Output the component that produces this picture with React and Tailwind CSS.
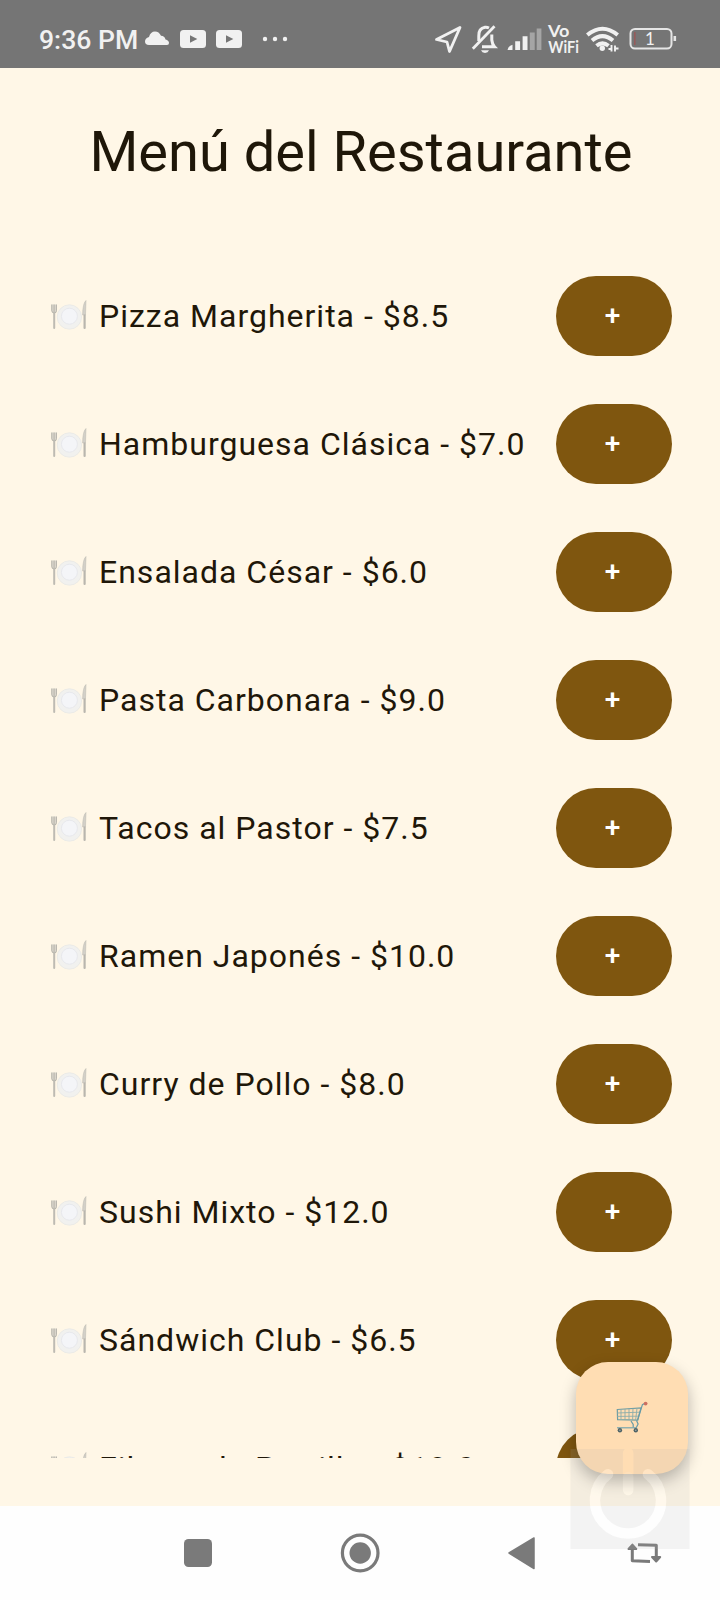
const dishes = [
  'Pizza Margherita - $8.5',
  'Hamburguesa Clásica - $7.0',
  'Ensalada César - $6.0',
  'Pasta Carbonara - $9.0',
  'Tacos al Pastor - $7.5',
  'Ramen Japonés - $10.0',
  'Curry de Pollo - $8.0',
  'Sushi Mixto - $12.0',
  'Sándwich Club - $6.5',
  'Filete a la Parrilla - $18.0',
];

function PlateIcon() {
  return (
    <svg className="block h-[34px] w-[38px] shrink-0" viewBox="0 0 38 34" fill="none">
      <circle cx="19.4" cy="18" r="12.2" fill="#f1f1ef" stroke="#e9e8e5" strokeWidth="0.8" />
      <circle cx="19.4" cy="17.2" r="8" fill="#f4f5f8" stroke="#e5e7eb" strokeWidth="0.9" />
      <path d="M1.500 5.500H6.600V11.500Q6.400 13.500 4 14Q1.700 13.500 1.500 11.500Z" fill="#dedad0" />
      <path d="M1.800 5.500v6.200q0 2.300 2.400 2.300t2.200-2.300V5.500M4.100 5.500v8" stroke="#aeaba4" strokeWidth="0.9" />
      <path d="M4.200 14v15" stroke="#bebbb3" strokeWidth="2" strokeLinecap="round" />
      <path d="M36 1.500Q32.800 4 32.600 16h2.900z" fill="#d3d0c8" stroke="#b9b6ae" strokeWidth="0.500" />
      <path d="M34.600 16.500v12.500" stroke="#b9b6ae" strokeWidth="2.200" strokeLinecap="round" />
    </svg>
  );
}

function CartIcon() {
  return (
    <svg className="mb-[2px] block h-[34px] w-[34px]" viewBox="0 0 34 34" fill="none">
      <path d="M2.300 9.500L26 8L22.600 20.200L2.600 19.600Z" stroke="#6f9da3" strokeWidth="1.200" />
      <path d="M6 9.300v10.300M10 9v10.800M14 8.800v11M18 8.600l-.4 11.400M22 8.300l-1.400 11.800M2.200 13l22.500-.8M2.400 16.400l21.200-.2" stroke="#8badaa" strokeWidth="0.900" />
      <path d="M22.600 20.200L27.400 4.600L30 3.200M16 21l2.200 3.400v3.200M21.500 20.500l1.600 3.500-2 4" stroke="#669aa6" strokeWidth="1.200" />
      <path d="M2 27.800h20" stroke="#76a6ae" strokeWidth="1.200" />
      <circle cx="30.600" cy="3.600" r="1.900" fill="#cc6f60" />
      <circle cx="4.900" cy="30.300" r="2.200" fill="#4e6266" />
      <circle cx="20.800" cy="30.300" r="2.200" fill="#4e6266" />
      <circle cx="4.900" cy="30.300" r="0.700" fill="#a8b5b3" />
      <circle cx="20.800" cy="30.300" r="0.700" fill="#a8b5b3" />
    </svg>
  );
}

function VideoIcon() {
  return (
    <svg className="block h-[18px] w-[26px]" viewBox="0 0 26 18">
      <rect width="26" height="18" rx="3.500" fill="#f1f1f1" />
      <path d="M10 5.200v7.600l7.300-3.800z" fill="#757575" />
    </svg>
  );
}

function StatusBar() {
  return (
    <header className="flex h-[68px] shrink-0 items-start bg-[#757575] pl-[39px] text-[#f1f1f1]">
      <span className="mt-[24px] w-[106px] text-[26.6px] leading-8 font-medium whitespace-nowrap">9:36 PM</span>
      <svg className="mt-[31px] block h-[14px] w-[24px]" viewBox="0 0 24 14" fill="#f1f1f1">
        <path d="M4 14Q0 13.800 0 10.500Q0 7 4 6Q5.500 0.500 10 0.500Q14 0.500 16 4.800Q19.500 4.800 20.500 8.500Q24 9.500 24 12Q24 14 22 14Z" />
      </svg>
      <div className="mt-[30px] ml-[11px] flex gap-[10px]">
        <VideoIcon />
        <VideoIcon />
      </div>
      <svg className="mt-[36px] ml-[20px] block h-[6px] w-[26px]" viewBox="0 0 26 6" fill="#f1f1f1">
        <circle cx="3" cy="3" r="2.200" />
        <circle cx="13" cy="3" r="2.200" />
        <circle cx="23" cy="3" r="2.200" />
      </svg>
      <svg className="mt-[20px] ml-[144px] block h-[36px] w-[246px]" viewBox="432 20 246 36" fill="none">
        <path d="M460 27.500L436.500 39.500L447 42L449.500 51.500Z" stroke="#f1f1f1" strokeWidth="2.800" strokeLinejoin="round" />
        <path d="M478.800 41V36Q478.500 28.500 485 27.300Q487 27 489 28M491.800 34.500V40Q492.300 44.500 494.500 46.800H482" stroke="#f1f1f1" strokeWidth="3" />
        <path d="M472.800 48.800L494.500 26.300" stroke="#f1f1f1" strokeWidth="2.800" />
        <path d="M481 50.300H489Q488 52.900 485 52.900Q482 52.900 481 50.300Z" fill="#f1f1f1" />
        <path d="M507.500 50Q508.500 45.500 512.500 44.800V50ZM515.200 41.200h4.900v8.800h-4.900zM522.600 36.300h4.900v13.700h-4.900z" fill="#f1f1f1" />
        <path d="M529.800 32.500h4.900v17.500h-4.900zM536.700 28.500h4.700v21.500h-4.700z" fill="#a5a5a5" />
        <g stroke="#f1f1f1" strokeWidth="4">
          <path d="M587.300 35Q602.500 22.500 617.700 35" />
          <path d="M592 40.500Q602.500 31.800 613 40.500" />
          <path d="M596.500 45.800Q602.500 41 608.500 45.800" />
        </g>
        <circle cx="602.300" cy="48.300" r="2.700" fill="#f1f1f1" />
        <path d="M611.500 45v6.500M615 45.500v6M608.500 49h3M615 48.500h3.500" stroke="#f1f1f1" strokeWidth="1.900" />
        <rect x="630.500" y="29" width="41" height="19.500" rx="4.500" stroke="#e5e5e5" strokeWidth="2" />
        <path d="M634.800 32v13" stroke="#965b5b" strokeWidth="1.600" />
        <path d="M674.800 36v5" stroke="#e5e5e5" strokeWidth="2.600" />
        <g fill="#f1f1f1" fontFamily="Lato, sans-serif" fontWeight="700">
          <text x="548" y="36.800" fontSize="17" textLength="21.500" lengthAdjust="spacingAndGlyphs">Vo</text>
          <text x="548.300" y="52.700" fontSize="17" textLength="30.500" lengthAdjust="spacingAndGlyphs">WiFi</text>
          <text x="645" y="45" fontSize="17" fontWeight="400">1</text>
        </g>
      </svg>
    </header>
  );
}

function NavBar() {
  return (
    <nav className="h-[94px] shrink-0 bg-[#fefefe]">
      <svg className="block h-[94px] w-[720px]" viewBox="0 1506 720 94" fill="none">
        <rect x="184" y="1539" width="28" height="28" rx="4.500" fill="#7a7a7a" />
        <circle cx="360.200" cy="1553" r="17.800" stroke="#7a7a7a" strokeWidth="3.200" />
        <circle cx="360.200" cy="1553" r="10.700" fill="#7a7a7a" />
        <path d="M509 1553L534 1538V1568.500Z" fill="#7a7a7a" stroke="#7a7a7a" strokeWidth="1.500" strokeLinejoin="round" />
        <g stroke="#7a7a7a" strokeWidth="3" strokeLinejoin="round">
          <path d="M638 1544.800L656.300 1545.300V1560M650 1561.500L632.300 1560.800V1546" />
          <path d="M628.500 1549L632.400 1544.600L636.300 1549ZM652 1557L656.200 1561.500L660.200 1557Z" fill="#7a7a7a" strokeWidth="2" />
        </g>
      </svg>
    </nav>
  );
}

function PowerOverlay() {
  return (
    <svg className="pointer-events-none absolute top-[1449px] left-[570px] h-[100px] w-[120px]" viewBox="0 0 120 100" fill="none">
      <mask id="power-cutout" maskUnits="userSpaceOnUse" x="0" y="0" width="120" height="100">
        <rect width="120" height="100" fill="#fff" />
        <path d="M38 25.200A33 33 0 1 0 78 25.200M58.200 4V41" stroke="#000" strokeWidth="10.500" strokeLinecap="round" />
      </mask>
      <rect x="0.500" width="119" height="100" fill="#b0b0b0" fillOpacity="0.14" mask="url(#power-cutout)" />
      <path d="M38 25.200A33 33 0 1 0 78 25.200" stroke="#fff" strokeOpacity="0.22" strokeWidth="10.500" strokeLinecap="round" />
      <path d="M58.200 28V41" stroke="#fff" strokeOpacity="0.1" strokeWidth="10.500" strokeLinecap="round" />
    </svg>
  );
}

export default function App() {
  return (
    <div className="relative flex h-[1600px] w-[720px] flex-col overflow-hidden bg-[#fff7e7] font-['Roboto',sans-serif] text-[#1f1709]">
      <StatusBar />
      <main className="flex h-[1438px] flex-col overflow-hidden">
        <h1 className="mt-[48px] pl-[2px] text-center text-[56px] leading-[72px] font-normal whitespace-nowrap">Menú del Restaurante</h1>
        <ul className="mt-[88px] flex h-[1182px] shrink-0 flex-col gap-12 overflow-hidden">
          {dishes.map((dish) => (
            <li key={dish} className="flex h-20 shrink-0 items-center pr-12 pl-[50px]">
              <PlateIcon />
              <span className="ml-[11px] text-[32px] leading-[48px] tracking-[1px] whitespace-nowrap">{dish}</span>
              <button className="ml-auto h-20 w-[116px] shrink-0 rounded-full bg-[#7f560f] pr-[3px] text-[28px] leading-10 font-medium text-white">+</button>
            </li>
          ))}
        </ul>
      </main>
      <NavBar />
      <button className="absolute top-[1362px] left-[576px] flex h-28 w-28 items-center justify-center rounded-[32px] bg-[#ffddb3] shadow-[0_7px_16px_rgba(0,0,0,0.28)]">
        <CartIcon />
      </button>
      <PowerOverlay />
    </div>
  );
}
